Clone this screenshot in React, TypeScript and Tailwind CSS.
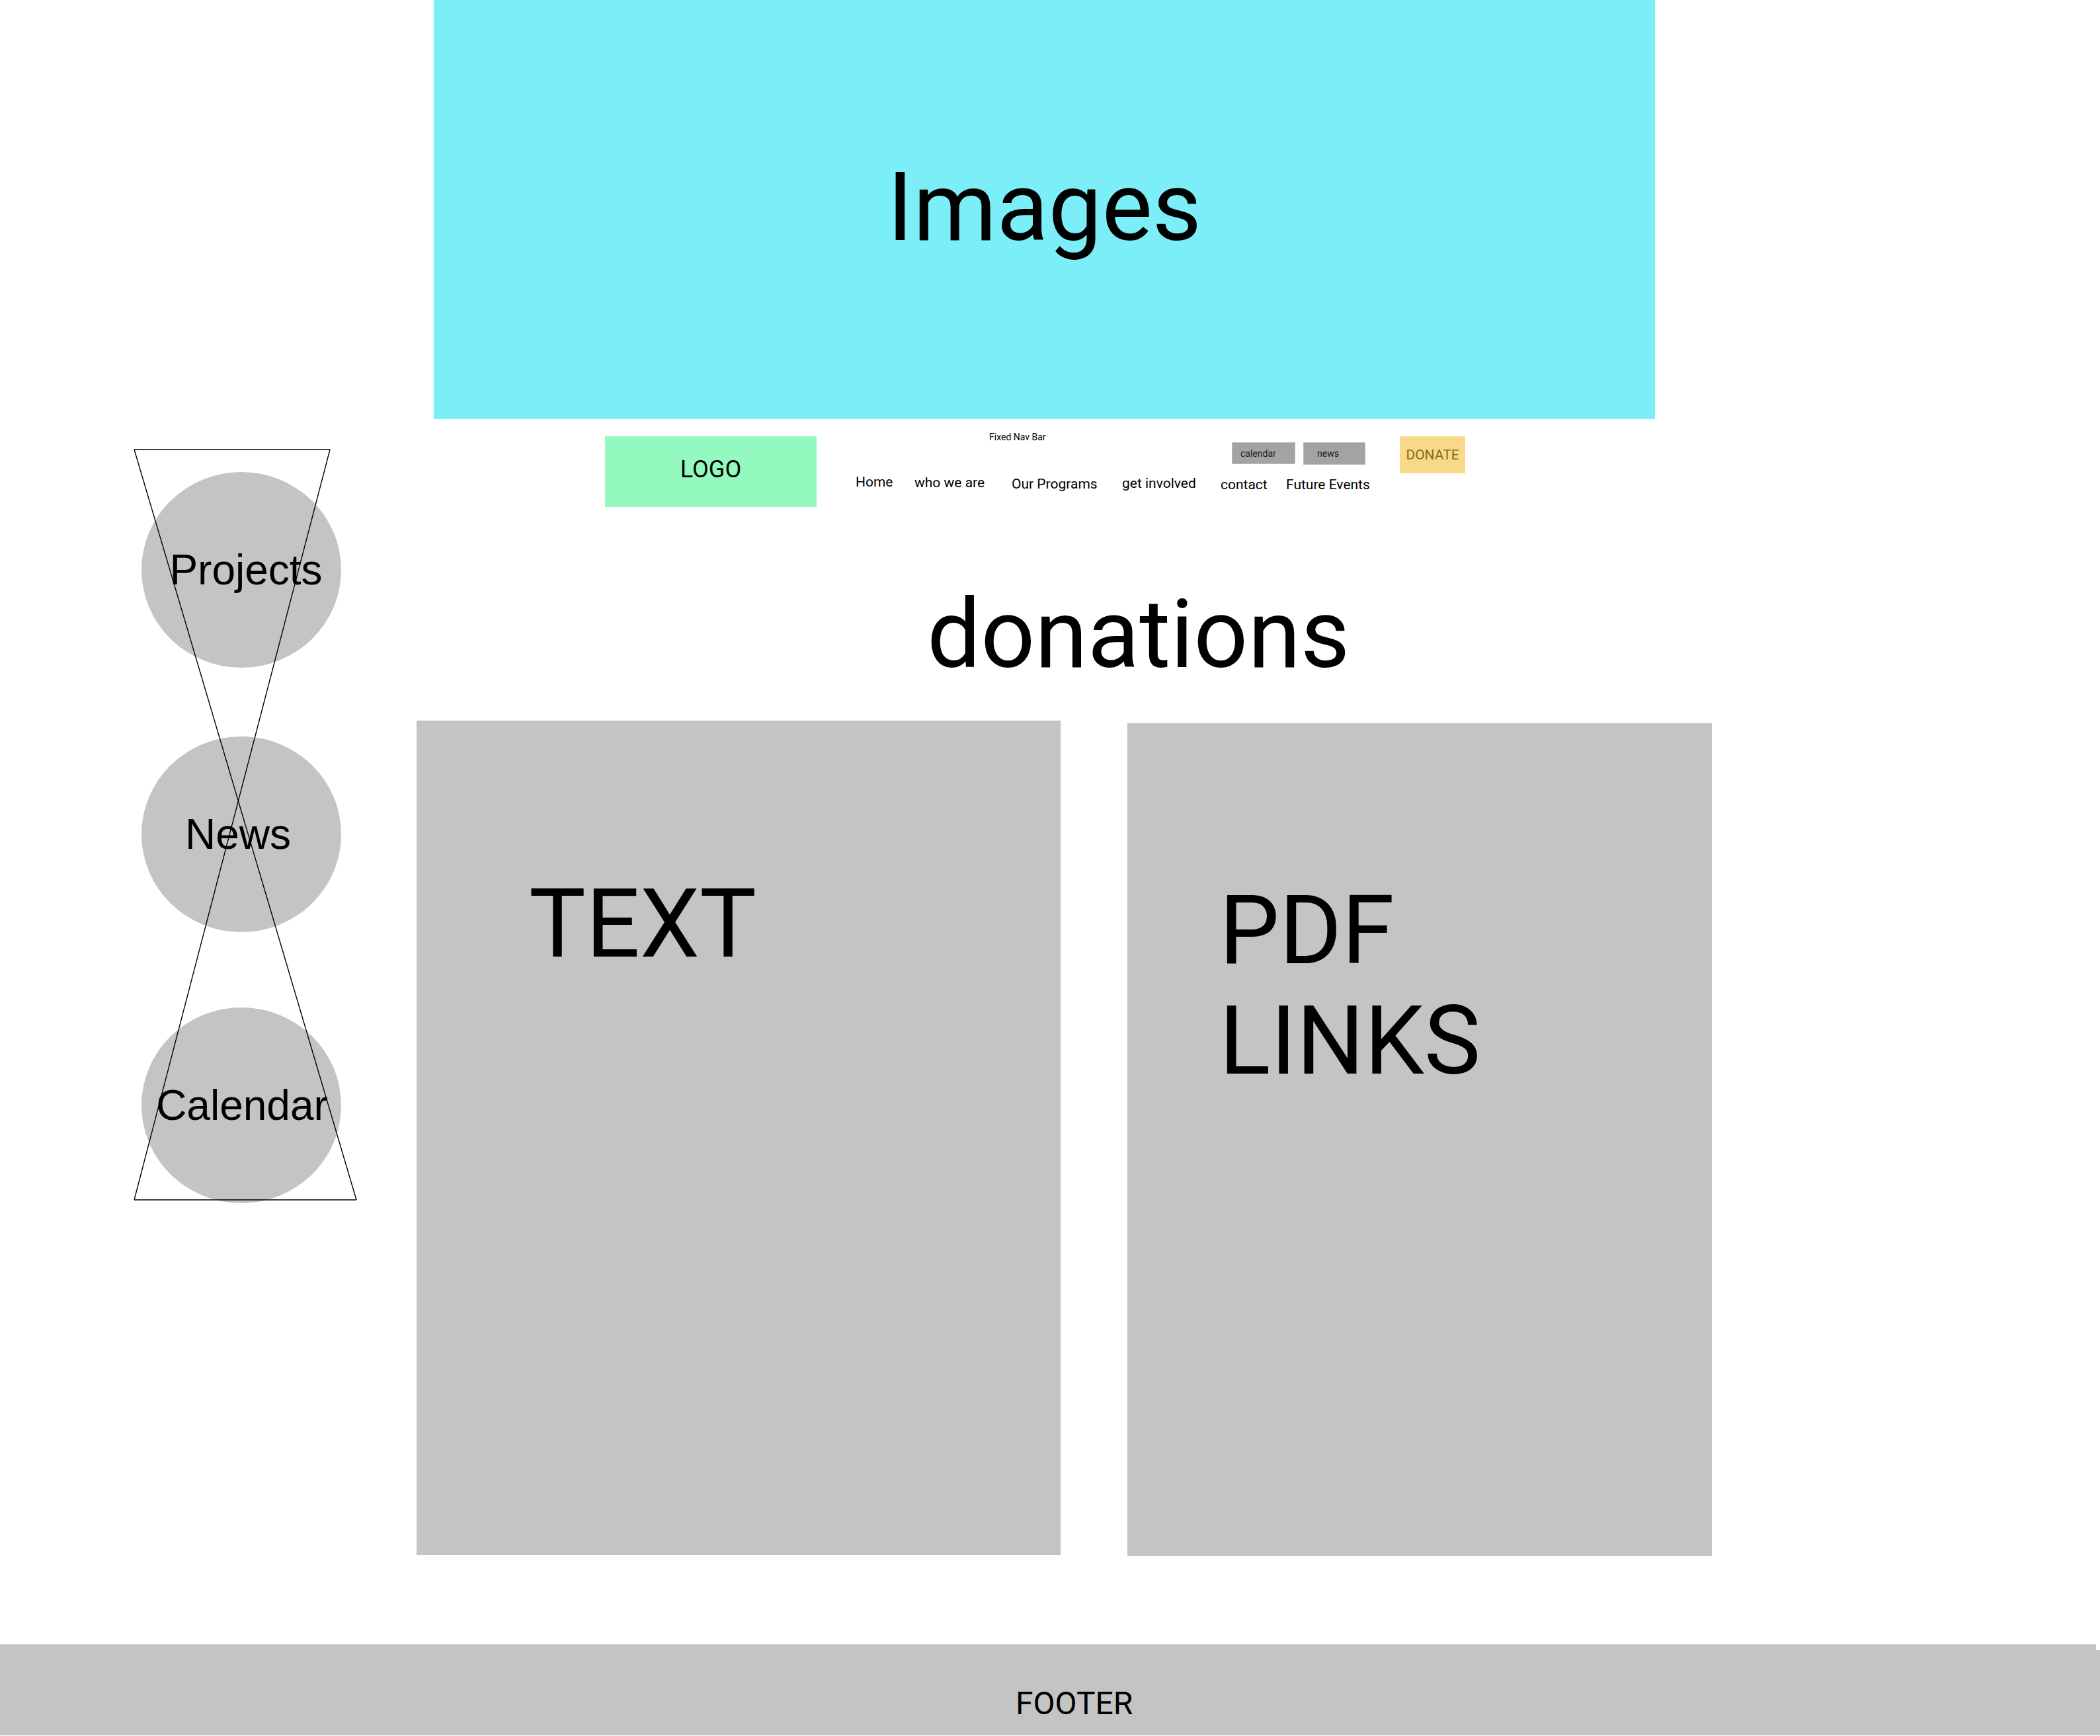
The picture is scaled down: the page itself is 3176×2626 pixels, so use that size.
import { clsx } from 'clsx';

const NAV_LINKS = [
  { label: 'Home', cls: 'w-[89px] -mt-[2px]' },
  { label: 'who we are', cls: 'w-[147px] -mt-[1px]' },
  { label: 'Our Programs', cls: 'w-[167px] mt-[1px]' },
  { label: 'get involved', cls: 'w-[149px]' },
  { label: 'contact', cls: 'w-[99px] mt-[2px]' },
  { label: 'Future Events', cls: 'mt-[2px]' },
];

const BUBBLES = [
  { label: 'Projects', cls: 'mt-[80px]', text: 'pl-[14px]' },
  { label: 'News', cls: 'mt-[104px]', text: '-ml-[10px]' },
  { label: 'Calendar', cls: 'mt-[114px]', text: 'pl-[2px]' },
];

function SideBubbles() {
  return (
    <aside className="relative w-[630px] shrink-0">
      {/* Circle links */}
      <div className="flex flex-col pl-[214px]">
        {BUBBLES.map(({ label, cls, text }) => (
          <div
            key={label}
            className={clsx(
              'flex items-center justify-center w-[302px] h-[296px] rounded-[50%] bg-[#c4c4c4]',
              cls
            )}
          >
            <span className={clsx("font-['Liberation_Sans',Arial,sans-serif] text-[64px] text-black", text)}>
              {label}
            </span>
          </div>
        ))}
      </div>

      {/* Hourglass sketch over the circles */}
      <svg
        className="absolute top-0 left-0 pointer-events-none"
        width="630"
        height="1200"
        viewBox="0 0 630 1200"
        fill="none"
        stroke="#000"
        strokeWidth="1.4"
      >
        <line x1="203" y1="46" x2="499" y2="46" />
        <line x1="203" y1="1181" x2="539" y2="1181" />
        <line x1="203" y1="46" x2="539" y2="1181" />
        <line x1="499" y1="46" x2="203" y2="1181" />
      </svg>
    </aside>
  );
}

function NavBar() {
  return (
    <nav className="flex items-start mt-[19px] pl-[285px]">
      {/* Logo */}
      <div className="flex items-center justify-center w-[320px] h-[107px] mt-[7px] pb-[8px] bg-[#93f9be]">
        <span className="text-[36px] text-black">LOGO</span>
      </div>

      <div className="flex flex-col w-[823px] ml-[59px]">
        <div className="flex items-start h-[66px]">
          <span className="w-[569px] pl-[202px] text-[14px] leading-[16px] text-black">Fixed Nav Bar</span>
          <div className="flex gap-[12px] mt-[16px]">
            <div className="flex items-center w-[96px] h-[33px] pl-[12px] bg-[#a3a3a3] border border-[#bdbdbd] text-[14px] text-[#1a1a1a]">
              calendar
            </div>
            <div className="flex items-center w-[94px] h-[34px] pl-[20px] bg-[#a3a3a3] border border-[#bdbdbd] text-[14px] text-[#1a1a1a]">
              news
            </div>
          </div>
        </div>
        <div className="flex items-start">
          {NAV_LINKS.map(({ label, cls }) => (
            <a key={label} className={clsx('text-[21px] text-black whitespace-nowrap', cls)}>
              {label}
            </a>
          ))}
        </div>
      </div>

      <button className="flex items-center justify-center w-[99px] h-[56px] mt-[7px] bg-[#f8d98a] text-[21px] text-[#8a6a1c]">
        DONATE
      </button>
    </nav>
  );
}

export default function App() {
  return (
    <div className="flex flex-col w-[3176px] h-[2626px] bg-white font-['Roboto',sans-serif] leading-[normal] text-black overflow-hidden">
      {/* Hero images */}
      <div className="pl-[656px] shrink-0">
        <div className="flex items-center justify-center w-[1847px] h-[634px] bg-[#7ceef7] pb-[8px]">
          <span className="text-[144px]">Images</span>
        </div>
      </div>

      <div className="flex flex-1">
        <SideBubbles />

        <main className="flex flex-col flex-1">
          <NavBar />

          <h1 className="mt-[108px] pl-[772px] text-[144px] font-normal">donations</h1>

          <div className="flex items-start gap-[101px] mt-[46px]">
            <section className="w-[974px] h-[1262px] bg-[#c4c4c4] pt-[223px] pl-[170px]">
              <p className="text-[144px]">TEXT</p>
            </section>
            <section className="w-[884px] h-[1260px] mt-[4px] bg-[#c4c4c4] pt-[230px] pl-[139px]">
              <p className="text-[144px] leading-[167px]">
                PDF
                <br />
                LINKS
              </p>
            </section>
          </div>
        </main>
      </div>

      {/* Footer */}
      <footer className="flex shrink-0 h-[139px] pb-[1px]">
        <div className="w-[3170px] h-full bg-[#c4c4c4] border-t border-[#d4d4d4] pt-[60px] pl-[1536px]">
          <span className="text-[48px]">FOOTER</span>
        </div>
        <div className="flex-1 mt-[9px] bg-[#c4c4c4]" />
      </footer>
    </div>
  );
}
